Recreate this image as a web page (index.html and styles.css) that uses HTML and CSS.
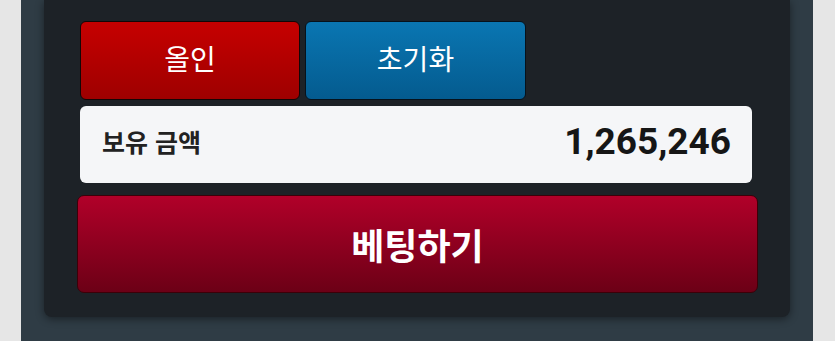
FILE: index.html
```html
<!DOCTYPE html>
<html lang="ko">
<head>
<meta charset="utf-8">
<link rel="stylesheet" href="styles.css">
</head>
<body>
<div class="outer">
  <div class="panel">
    <div class="quick">
      <button class="btn btn-red">올인</button>
      <button class="btn btn-blue">초기화</button>
    </div>
    <div class="balance">
      <span class="label">보유 금액</span>
      <span class="amount">1,265,246</span>
    </div>
    <button class="bet">베팅하기</button>
  </div>
</div>
</body>
</html>
```
FILE: styles.css
```css
html, body {
  margin: 0;
  padding: 0;
}
body {
  background: #e6e6e6;
  width: 835px;
  height: 341px;
  overflow: hidden;
  font-family: "Noto Sans CJK KR", "Noto Sans", sans-serif;
}
.outer {
  margin: 0 22px 0 21px;
  height: 341px;
  background: #2f3c45;
  padding: 0 23px 0 23px;
  box-sizing: border-box;
}
.panel {
  background: #1d2227;
  border-radius: 0 0 8px 8px;
  box-shadow: 0 2px 8px rgba(0, 0, 0, 0.45);
  padding: 21px 38px 24px 36px;
}
.quick {
  display: grid;
  grid-template-columns: 220px 221px 1fr;
  gap: 5px;
}
.btn {
  height: 79px;
  border-radius: 6px;
  border: 1px solid #140606;
  color: #fff;
  font-family: "Noto Sans CJK KR", sans-serif;
  font-size: 28px;
  font-weight: 400;
  padding: 0 0 5px 0;
}
.btn-red {
  background: linear-gradient(#c60000, #9e0000);
}
.btn-blue {
  background: linear-gradient(#0a76b2, #045b8f);
  border-color: #06121c;
}
.balance {
  margin-top: 6px;
  height: 77px;
  box-sizing: border-box;
  background: #f5f6f8;
  border-radius: 6px;
  display: flex;
  align-items: center;
  justify-content: space-between;
  padding: 0 21px 7px 22px;
}
.label {
  font-size: 25px;
  font-weight: 700;
  color: #222;
}
.amount {
  font-family: Roboto, "Noto Sans", sans-serif;
  font-size: 37px;
  font-weight: 700;
  color: #161616;
}
.bet {
  display: block;
  margin: 12px -6px 0 -3px;
  width: calc(100% + 9px);
  height: 98px;
  border-radius: 7px;
  border: 1px solid #3c0008;
  background: linear-gradient(#b10029, #6c0016);
  color: #fff;
  font-family: "Noto Sans CJK KR", sans-serif;
  font-size: 36px;
  font-weight: 700;
  padding: 0;
}
```
